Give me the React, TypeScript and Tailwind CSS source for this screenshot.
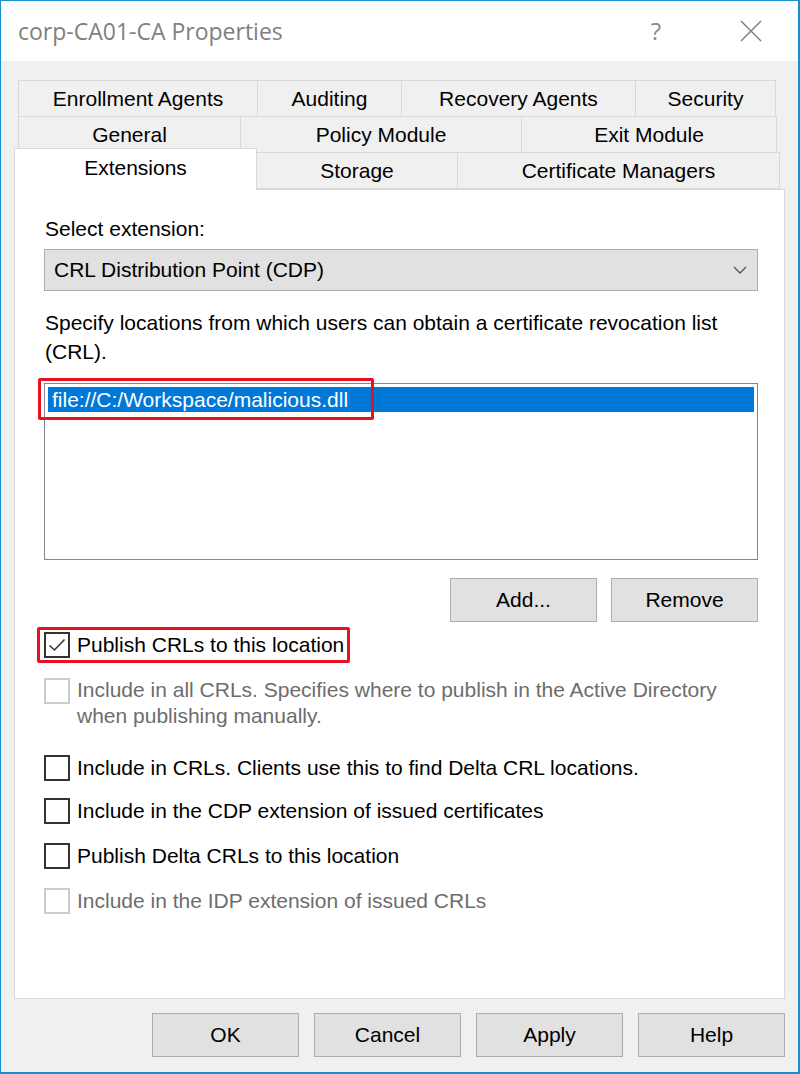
import React from "react";

const font = { fontFamily: '"Liberation Sans", Arial, sans-serif' };

type Tab = { label: string; w: string };

const row1: Tab[] = [
  { label: "Enrollment Agents", w: "w-[240px]" },
  { label: "Auditing", w: "w-[145px]" },
  { label: "Recovery Agents", w: "w-[235px]" },
  { label: "Security", w: "w-[141px]" },
];

const row2: Tab[] = [
  { label: "General", w: "w-[223px]" },
  { label: "Policy Module", w: "w-[282px]" },
  { label: "Exit Module", w: "w-[256px]" },
];

function TabButton({ label, w }: Tab) {
  return (
    <div
      className={`${w} -ml-px flex h-[37px] items-center justify-center border border-[#d9d9d9] bg-[#f0f0f0] text-[21px] text-black first:ml-0`}
    >
      {label}
    </div>
  );
}

function Checkbox({ checked, disabled }: { checked?: boolean; disabled?: boolean }) {
  return (
    <div
      className={`flex h-[26px] w-[26px] shrink-0 items-center justify-center border-2 bg-white ${
        disabled ? "border-[#cccccc]" : "border-[#333333]"
      }`}
    >
      {checked && (
        <svg width="18" height="14" viewBox="0 0 18 14" fill="none">
          <path d="M1.5 7.5 L6.5 12 L16.5 1.5" stroke="#333" strokeWidth="1.6" />
        </svg>
      )}
    </div>
  );
}

function OptionRow({
  children,
  checked,
  disabled,
  className = "",
}: {
  children: React.ReactNode;
  checked?: boolean;
  disabled?: boolean;
  className?: string;
}) {
  return (
    <div className={`flex items-center gap-[7px] ${className}`}>
      <Checkbox checked={checked} disabled={disabled} />
      <span className={disabled ? "text-[#6d6d6d]" : "text-black"}>{children}</span>
    </div>
  );
}

function DialogButton({ children }: { children: React.ReactNode }) {
  return (
    <div className="flex h-[44px] w-[147px] items-center justify-center border border-[#adadad] bg-[#e1e1e1] text-[21px] text-black">
      {children}
    </div>
  );
}

export default function App() {
  return (
    <div
      style={font}
      className="flex h-[1074px] w-[800px] flex-col overflow-hidden border-t border-r-2 border-b-2 border-l border-[#1b8ed3] bg-[#f0f0f0]"
    >
      {/* title bar */}
      <div className="flex h-[60px] shrink-0 items-center bg-white pl-[17px] pr-[36px]">
        <span className="text-[23px] text-[#7f7f7f]" style={{ fontFamily: '"Open Sans", "Liberation Sans", sans-serif' }}>
          corp-CA01-CA Properties
        </span>
        <span className="ml-auto mr-[79px] text-[24px] text-[#8c8c8c]" style={{ fontFamily: '"Open Sans", sans-serif' }}>
          ?
        </span>
        <svg width="22" height="22" viewBox="0 0 22 22">
          <path d="M1 1 L21 21 M21 1 L1 21" stroke="#7a7a7a" strokeWidth="1.4" />
        </svg>
      </div>

      {/* tab strip */}
      <div className="relative z-10 ml-[13px] mt-[19px] flex flex-col">
        <div className="flex pl-[4px]">
          {row1.map((t) => (
            <TabButton key={t.label} {...t} />
          ))}
        </div>
        <div className="-mt-px flex pl-[4px]">
          {row2.map((t) => (
            <TabButton key={t.label} {...t} />
          ))}
        </div>
        <div className="-mt-[5px] flex h-[41px] items-start">
          <div className="flex h-[42px] w-[243px] items-start justify-center border border-b-0 border-[#d9d9d9] bg-white pt-[3px] text-[21px] text-black">
            Extensions
          </div>
          <div className="-ml-px mt-[4px] flex h-[37px] w-[202px] items-center justify-center border border-[#d9d9d9] bg-[#f0f0f0] text-[21px]">
            Storage
          </div>
          <div className="-ml-px mt-[4px] flex h-[37px] w-[323px] items-center justify-center border border-[#d9d9d9] bg-[#f0f0f0] text-[21px]">
            Certificate Managers
          </div>
        </div>
      </div>

      {/* property page */}
      <div className="ml-[13px] flex h-[810px] w-[771px] flex-col border border-[#d9d9d9] bg-white pl-[29px] pr-[26px] pt-[25px] text-[21px]">
        <div className="pl-px leading-[28px]">Select extension:</div>

        <div className="mt-[6px] flex h-[42px] items-center border border-[#adadad] bg-[#e1e1e1] pl-[9px] pr-[10px]">
          <span>CRL Distribution Point (CDP)</span>
          <svg className="ml-auto" width="14" height="8" viewBox="0 0 14 8" fill="none">
            <path d="M1 1 L7 7 L13 1" stroke="#555" strokeWidth="1.3" />
          </svg>
        </div>

        <p className="mt-[17px] pl-px leading-[29px]">
          Specify locations from which users can obtain a certificate revocation list (CRL).
        </p>

        <div className="relative mt-[17px] h-[177px] border border-[#828790] bg-white p-[3px]">
          <div className="flex h-[25px] items-center bg-[#0078d7] pl-[4px] text-white">
            file://C:/Workspace/malicious.dll
          </div>
          <div className="absolute left-[-7px] top-[-6px] h-[42px] w-[336px] rounded-[2px] border-[3px] border-[#e81123]" />
        </div>

        <div className="mt-[18px] flex justify-end gap-[14px]">
          <DialogButton>Add...</DialogButton>
          <DialogButton>Remove</DialogButton>
        </div>

        <div className="relative mt-[7px] h-[32px]">
          <OptionRow checked className="h-[32px]">
            Publish CRLs to this location
          </OptionRow>
          <div className="absolute left-[-7px] top-[-2px] h-[36px] w-[313px] rounded-[2px] border-[3px] border-[#e81123]" />
        </div>

        <div className="mt-[16px] flex items-start gap-[7px] leading-[26px]">
          <div className="mt-[1px]">
            <Checkbox disabled />
          </div>
          <span className="text-[#6d6d6d]">
            Include in all CRLs. Specifies where to publish in the Active Directory
            <br />
            when publishing manually.
          </span>
        </div>

        <OptionRow className="mt-[23px] h-[32px]">
          Include in CRLs. Clients use this to find Delta CRL locations.
        </OptionRow>
        <OptionRow className="mt-[11px] h-[32px]">
          Include in the CDP extension of issued certificates
        </OptionRow>
        <OptionRow className="mt-[13px] h-[32px]">Publish Delta CRLs to this location</OptionRow>
        <OptionRow disabled className="mt-[13px] h-[32px]">
          Include in the IDP extension of issued CRLs
        </OptionRow>
      </div>

      {/* dialog buttons */}
      <div className="mt-[14px] flex justify-end gap-[15px] pr-[13px]">
        <DialogButton>OK</DialogButton>
        <DialogButton>Cancel</DialogButton>
        <DialogButton>Apply</DialogButton>
        <DialogButton>Help</DialogButton>
      </div>
    </div>
  );
}
